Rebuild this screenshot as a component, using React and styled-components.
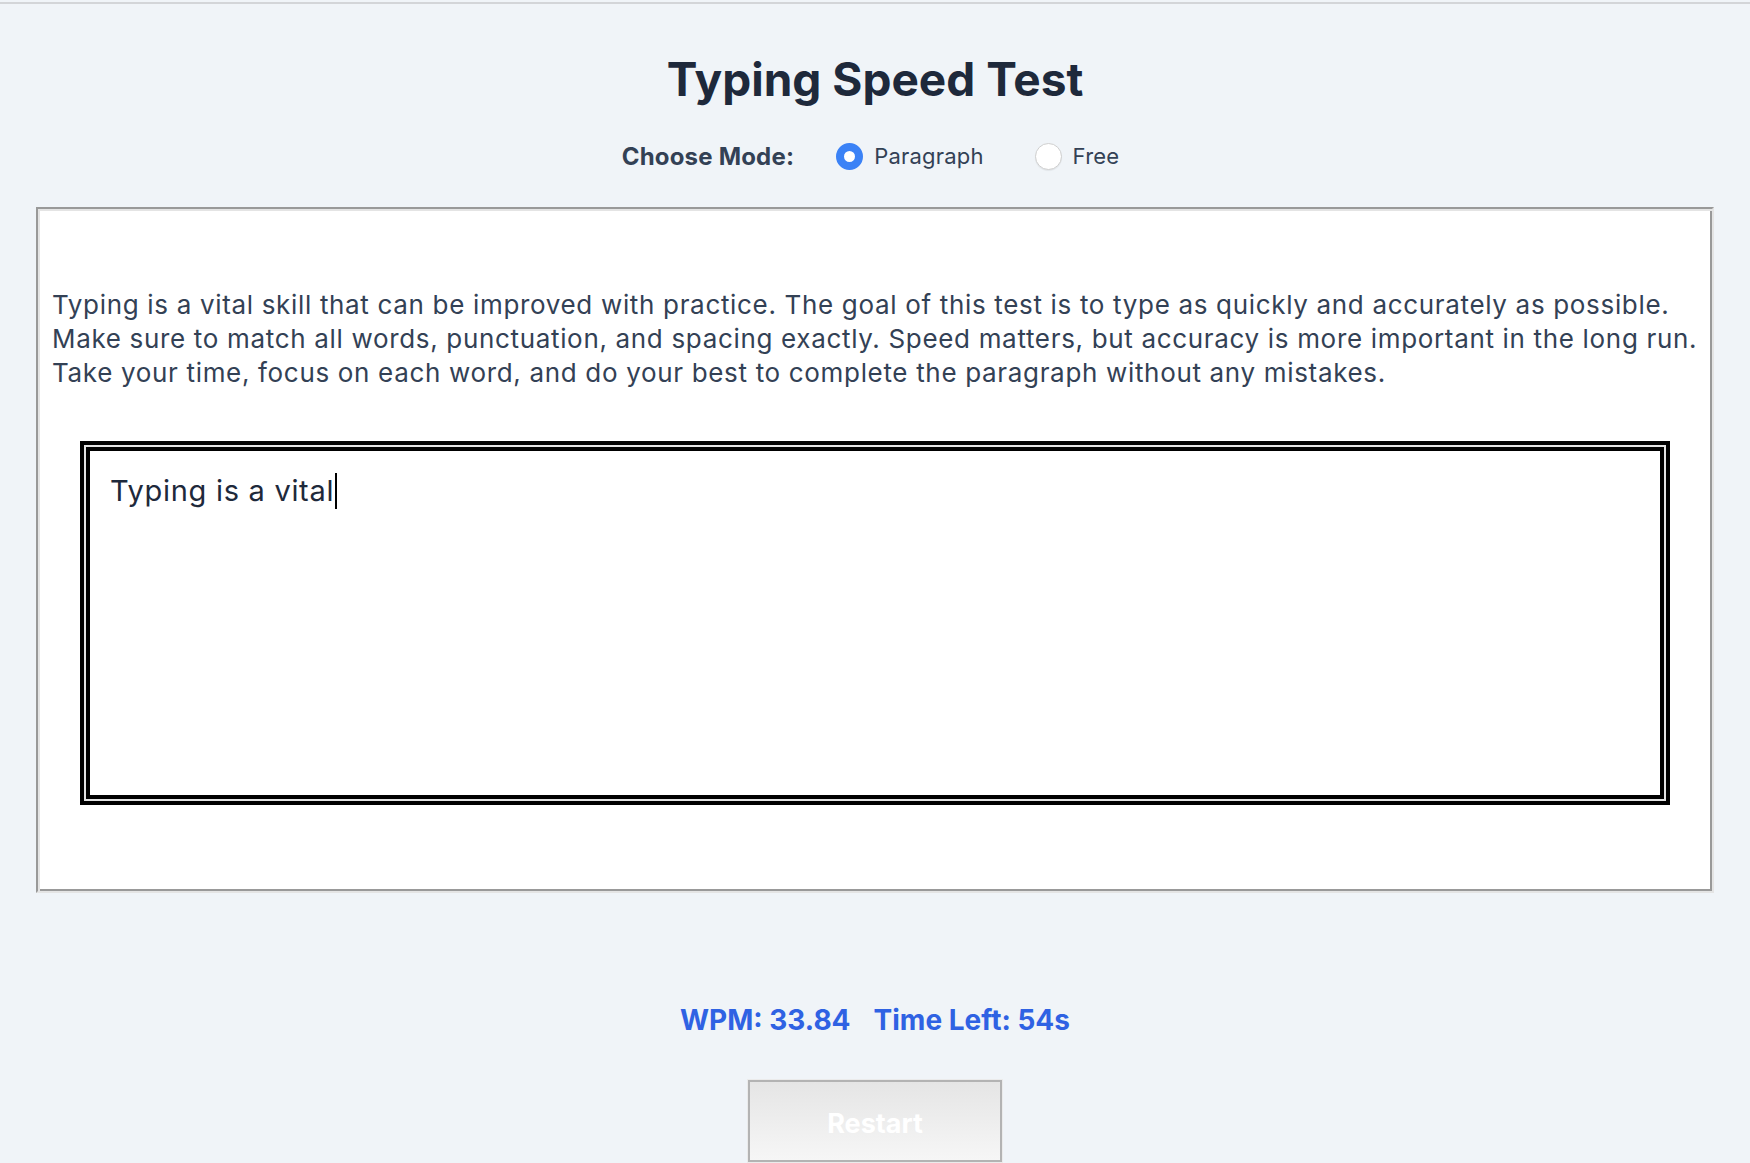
import React from 'react';
import styled, { createGlobalStyle } from 'styled-components';

const Global = createGlobalStyle`
  html, body { margin: 0; padding: 0; background: #f0f4f8; }
  body { font-family: Inter, "Noto Sans", Arial, sans-serif; -webkit-font-smoothing: antialiased; }
  * { box-sizing: border-box; }
`;

const Page = styled.div`
  height: 1163px;
  overflow: hidden;
  margin-top: 2px;
  border-top: 2px solid #d3d5d8;
  display: flex;
  flex-direction: column;
  align-items: center;
  padding: 0 36px;
`;

const Title = styled.h1`
  margin: 46px 0 0;
  font-size: 46px;
  line-height: 58px;
  font-weight: 700;
  color: #1e293b;
`;

const ModeRow = styled.div`
  margin-top: 34px;
  display: flex;
  align-items: center;
  height: 28px;
  margin-left: -9px;
`;

const ModeLabel = styled.span`
  font-size: 24px;
  font-weight: 700;
  letter-spacing: 0.2px;
  color: #334155;
  margin-right: 42px;
`;

const Option = styled.label`
  display: flex;
  align-items: center;
  gap: 11px;
  font-size: 22px;
  letter-spacing: 0.2px;
  color: #334155;
  & + & { margin-left: 51px; }
`;

const Radio = styled.input.attrs({ type: 'radio' })`
  appearance: none;
  margin: 0;
  width: 27px;
  height: 27px;
  border-radius: 50%;
  border: 1px solid #cfcfcf;
  background: #fff;
  box-shadow: 0 1px 1px rgba(0,0,0,0.06);
  &:checked {
    border: 8px solid #3b82f6;
    background: #fff;
    box-shadow: none;
  }
`;

const Card = styled.section`
  margin-top: 37px;
  background: #fff;
  border-style: solid;
  border-width: 2px;
  border-color: #999 #e4e4e4 #e4e4e4 #999;
  box-shadow: inset 2px 2px 0 #e4e4e4, inset -2px -2px 0 #999;
  padding: 79px 12px 84px 14px;
  width: 1678px;
  height: 686px;
  flex-shrink: 0;
`;

const Passage = styled.p`
  margin: 0;
  font-size: 26px;
  line-height: 34px;
  letter-spacing: 0.67px;
  color: #334155;
  white-space: nowrap;
`;

const InputBox = styled.div`
  margin: 51px 30px 0 28px;
  height: 364px;
  border: 4px solid #000;
  box-shadow: inset 0 0 0 2px #e3e3e3, inset 0 0 0 6px #000;
  padding: 26px 26px;
  font-size: 29px;
  line-height: 40px;
  letter-spacing: 0.7px;
  color: #1e293b;
`;

const Caret = styled.span`
  display: inline-block;
  width: 2px;
  height: 36px;
  background: #000;
  vertical-align: -8px;
  margin-left: 1px;
`;

const Stats = styled.div`
  margin-top: 109px;
  display: flex;
  gap: 23px;
  font-size: 28px;
  line-height: 36px;
  font-weight: 700;
  color: #2f62e3;
`;

const RestartButton = styled.button`
  margin-top: 42px;
  width: 254px;
  height: 82px;
  padding: 4px 0 0;
  border: 2px solid #b3b3b3;
  outline: 1px solid #ebebeb;
  background: linear-gradient(#e5e5e5, #f6f6f6);
  color: #fff;
  font-family: inherit;
  font-size: 27px;
  font-weight: 700;
  flex-shrink: 0;
`;

export default function App() {
  return (
    <>
      <Global />
      <Page>
        <Title>Typing Speed Test</Title>
        <ModeRow>
          <ModeLabel>Choose Mode:</ModeLabel>
          <Option><Radio name="mode" defaultChecked />Paragraph</Option>
          <Option><Radio name="mode" />Free</Option>
        </ModeRow>
        <Card>
          <Passage>
            Typing is a vital skill that can be improved with practice. The goal of this test is to type as quickly and accurately as possible.
            <br />
            Make sure to match all words, punctuation, and spacing exactly. Speed matters, but accuracy is more important in the long run.
            <br />
            Take your time, focus on each word, and do your best to complete the paragraph without any mistakes.
          </Passage>
          <InputBox>Typing is a vital<Caret /></InputBox>
        </Card>
        <Stats>
          <span>WPM: 33.84</span>
          <span>Time Left: 54s</span>
        </Stats>
        <RestartButton disabled>Restart</RestartButton>
      </Page>
    </>
  );
}
